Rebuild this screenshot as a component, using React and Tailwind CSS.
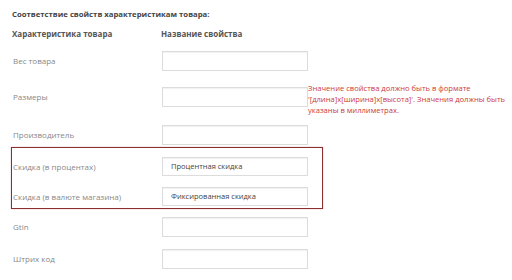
const font = { fontFamily: '"Open Sans", "Liberation Sans", sans-serif' };

function Field({ value, h = 'h-[20px]' }) {
  return (
    <div className={`w-[146px] ${h} shrink-0 border border-[#dcdcdc] bg-white shadow-[inset_0_1px_1px_rgba(0,0,0,0.06)] flex items-center pl-[8px] text-[7.5px] text-[#444]`}>
      {value}
    </div>
  );
}

function Row({ label, value, className = '' }) {
  return (
    <div className={`flex items-center ${className}`}>
      <div className="w-[149px] shrink-0 text-[8px] text-[#888]">{label}</div>
      <Field value={value} />
    </div>
  );
}

export default function App() {
  return (
    <div className="w-[512px] h-[280px] bg-white overflow-hidden" style={font}>
      <div className="pl-[13px] pt-[8px]">
        <div className="h-[12px] leading-[12px] text-[7.75px] font-bold text-[#444] -ml-px">
          Соответствие свойств характеристикам товара:
        </div>
        <div className="mt-[8px] h-[12px] leading-[12px] flex text-[8px] font-bold text-[#555]">
          <div className="w-[149px] -ml-px">Характеристика товара</div>
          <div>Название свойства</div>
        </div>

        <Row label="Вес товара" className="mt-[11px]" />

        <div className="flex items-start mt-[16px]">
          <div className="w-[149px] shrink-0 h-[20px] flex items-center text-[8px] text-[#888]">Размеры</div>
          <Field />
          <div className="-mt-[4px] flex-1 text-[7.6px] leading-[11px] text-[#cc3a3a]">
            Значение свойства должно быть в формате '[длина]x[ширина]x[высота]'. Значения должны быть указаны в миллиметрах.
          </div>
        </div>

        <Row label="Производитель" className="mt-[9px]" />

        <div className="mt-[2px] -ml-[2px] w-[312px] border border-[#8e2f2f] shadow-[0_0_1px_rgba(142,47,47,0.5)] pl-[1px] pt-[9px] pb-[2px] flex flex-col gap-[11px]">
          <div className="flex items-center">
            <div className="w-[149px] shrink-0 text-[8px] text-[#888]">Скидка (в процентах)</div>
            <Field value="Процентная скидка" h="h-[19px]" />
          </div>
          <div className="flex items-center">
            <div className="w-[149px] shrink-0 text-[8px] text-[#888]">Скидка (в валюте магазина)</div>
            <Field value="Фиксированная скидка" h="h-[19px]" />
          </div>
        </div>

        <Row label="Gtin" className="mt-[8px]" />
        <Row label="Штрих код" className="mt-[12px]" />
      </div>
    </div>
  );
}
